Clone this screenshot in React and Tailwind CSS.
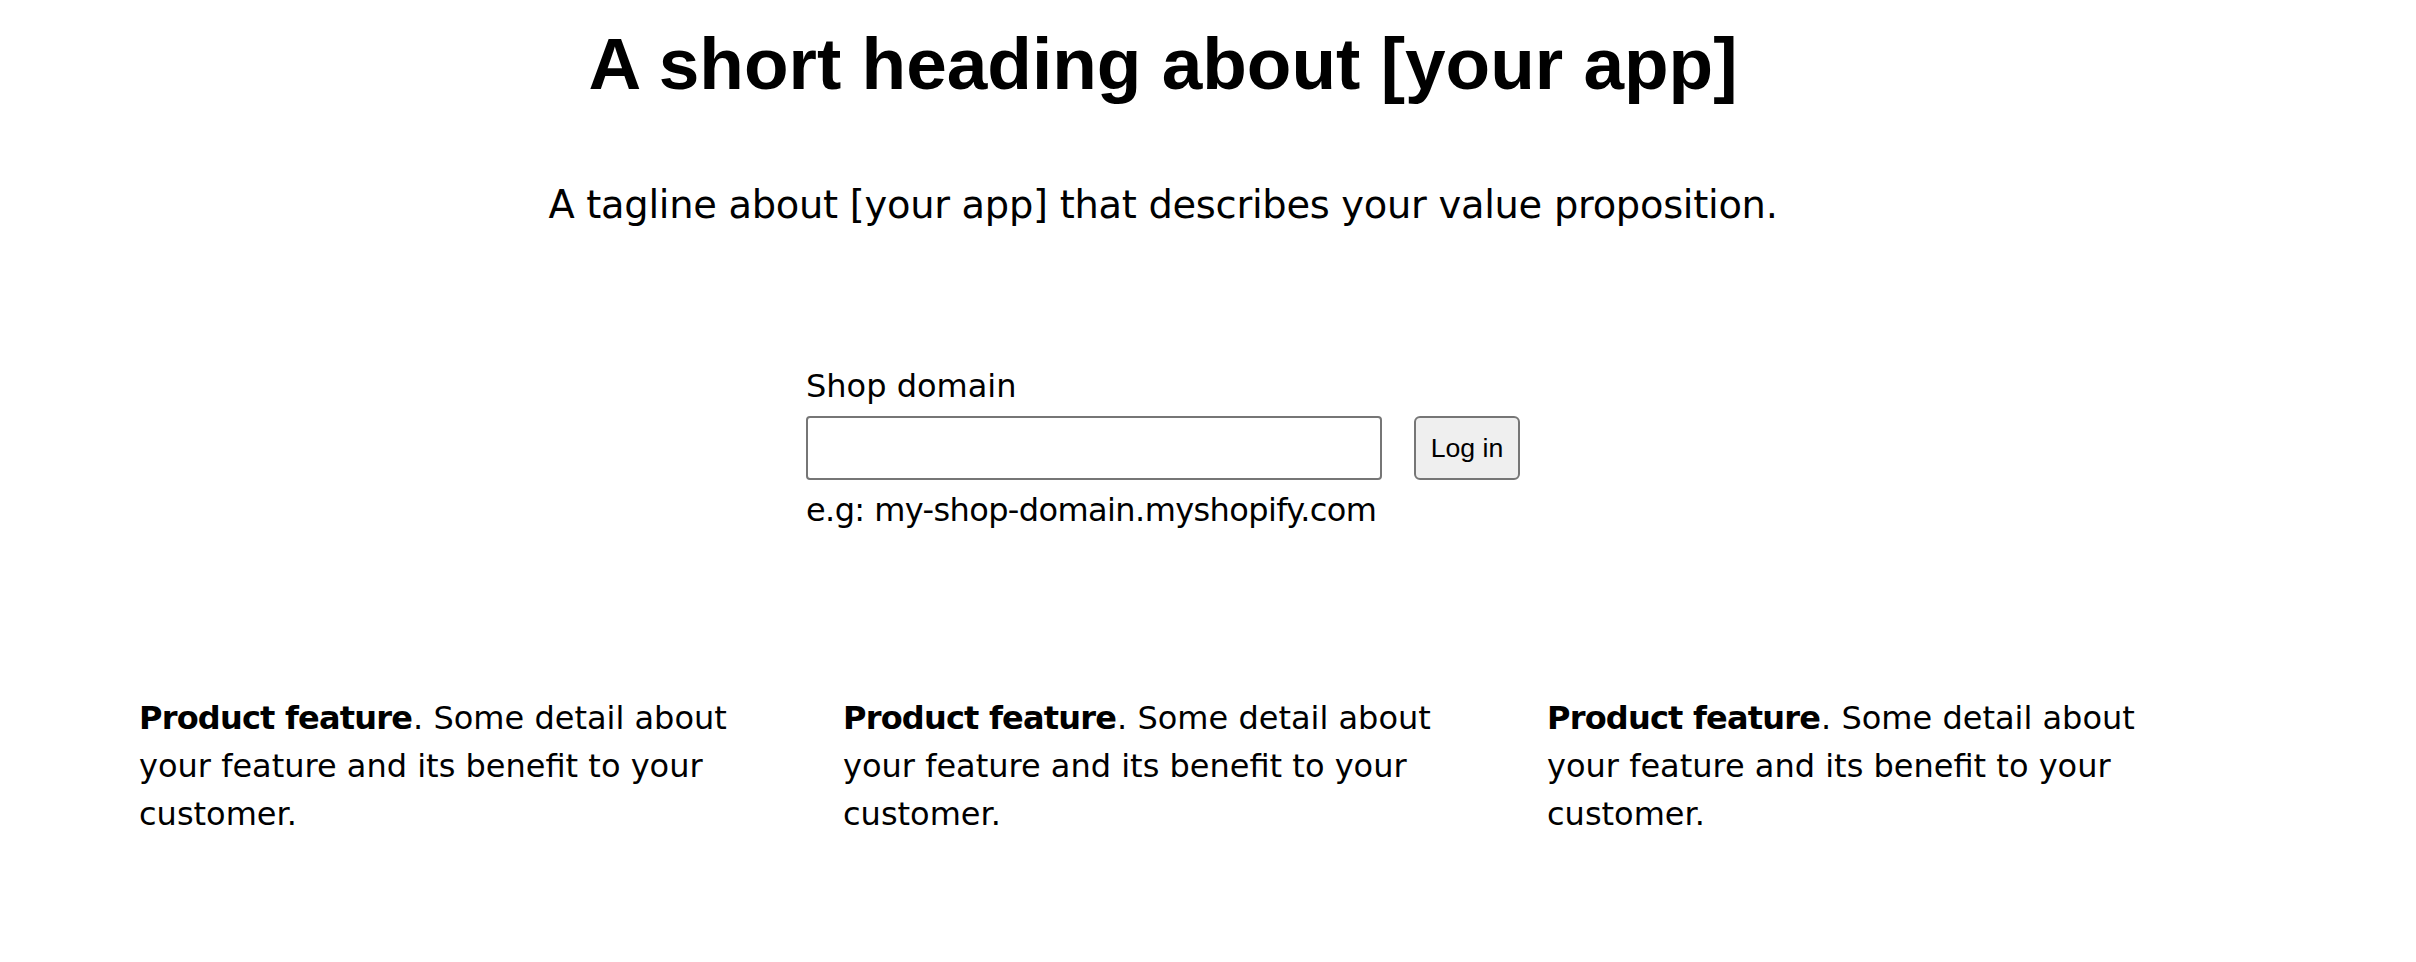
export default function App() {
  const features = [1, 2, 3];

  return (
    <div className="min-h-screen bg-white text-black">
      {/* centred column, same as the template's .index */}
      <div className="ml-[139px] w-[2048px] pt-[27px] text-center font-['DejaVu_Sans',sans-serif]">
        <h1 className="m-0 font-['Liberation_Sans',Arial,sans-serif] text-[73px] font-bold leading-[73px]">
          A short heading about [your app]
        </h1>
        <p className="m-0 mt-[76px] text-[38.4px] leading-[57.6px] tracking-[-0.28px]">
          A tagline about [your app] that describes your value proposition.
        </p>

        {/* login form */}
        <form
          className="mt-[128px] flex items-center justify-center gap-8"
          onSubmit={(e) => e.preventDefault()}
        >
          <label className="grid w-[576px] gap-[6.4px] text-left text-[32px] leading-[48px]">
            <span>Shop domain</span>
            <input
              type="text"
              name="shop"
              className="h-[64px] w-[576px] rounded-[4px] border-2 border-[#767676] bg-white px-3 outline-none"
            />
            <span className="whitespace-nowrap tracking-[-0.6px]">e.g: my-shop-domain.myshopify.com</span>
          </label>
          <button
            type="submit"
            className="h-[64px] w-[106px] rounded-[6px] border-2 border-[#767676] bg-[#efefef] font-['Liberation_Sans',Arial,sans-serif] text-[26.67px] leading-none text-black"
          >
            Log in
          </button>
        </form>

        {/* feature list */}
        <ul className="m-0 mt-[160px] flex list-none gap-16 p-0">
          {features.map((n) => (
            <li key={n} className="w-[640px] text-left text-[32px] leading-[48px]">
              <strong className="mr-[1px] font-bold tracking-[-0.8px]">Product feature</strong>. Some detail about
              your feature and its benefit to your customer.
            </li>
          ))}
        </ul>
      </div>
    </div>
  );
}
